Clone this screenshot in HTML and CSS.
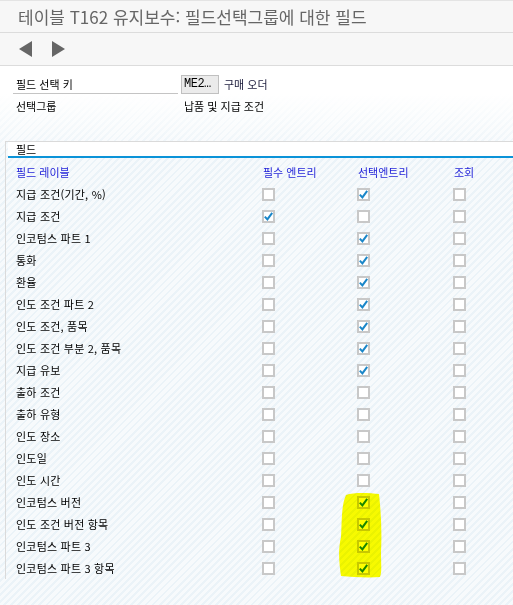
FILE: index.html
```html
<!DOCTYPE html>
<html lang="ko">
<head>
  <meta charset="UTF-8">
  <title>테이블 T162 유지보수</title>
  <link rel="stylesheet" href="styles.css">
</head>
<body>

  <header class="titlebar">테이블 T162 유지보수: 필드선택그룹에 대한 필드</header>

  <div class="toolbar">
    <svg class="nav-btn" width="14" height="16" viewBox="0 0 14 16"><polygon points="13,0 13,16 0,8" fill="#666"/></svg>
    <svg class="nav-btn" width="14" height="16" viewBox="0 0 14 16"><polygon points="1,0 1,16 14,8" fill="#666"/></svg>
  </div>

  <div class="content">
    <div class="head-form">
      <div class="form-row">
        <span class="form-label underline">필드 선택 키</span>
        <span class="key-box">ME2…</span>
        <span class="key-text">구매 오더</span>
      </div>
      <div class="form-row">
        <span class="form-label">선택그룹</span>
        <span class="group-text">납품 및 지급 조건</span>
      </div>
    </div>

    <div class="groupbox">
      <div class="group-title">필드</div>
      <div class="field-grid" id="fieldGrid">
        <div class="col-head">필드 레이블</div>
        <div class="col-head">필수 엔트리</div>
        <div class="col-head">선택엔트리</div>
        <div class="col-head">조회</div>
      </div>
    </div>

    <svg class="marker" width="46" height="88" viewBox="0 0 46 88">
      <path d="M8 3 C16 0 32 1 41 2 C43 20 44 40 43 60 C43 72 44 80 42 85 C30 86 14 85 3 84 C1 70 0 58 3 45 C4 30 3 14 8 3 Z" fill="#ffff00"/>
    </svg>
  </div>

  <script>
    const rows = [
      ['지급 조건(기간, %)', 0, 1, 0],
      ['지급 조건', 1, 0, 0],
      ['인코텀스 파트 1', 0, 1, 0],
      ['통화', 0, 1, 0],
      ['환율', 0, 1, 0],
      ['인도 조건 파트 2', 0, 1, 0],
      ['인도 조건, 품목', 0, 1, 0],
      ['인도 조건 부분 2, 품목', 0, 1, 0],
      ['지급 유보', 0, 1, 0],
      ['출하 조건', 0, 0, 0],
      ['출하 유형', 0, 0, 0],
      ['인도 장소', 0, 0, 0],
      ['인도일', 0, 0, 0],
      ['인도 시간', 0, 0, 0],
      ['인코텀스 버전', 0, 1, 0],
      ['인도 조건 버전 항목', 0, 1, 0],
      ['인코텀스 파트 3', 0, 1, 0],
      ['인코텀스 파트 3 항목', 0, 1, 0]
    ];

    const check = '<svg width="9" height="9" viewBox="0 0 9 9"><path d="M0.8 4.6 L3.4 7.4 L8.2 0.8" fill="none" stroke="#1a86c8" stroke-width="2"/></svg>';
    const grid = document.getElementById('fieldGrid');

    rows.forEach(function (r) {
      const label = document.createElement('div');
      label.className = 'cell label';
      label.textContent = r[0];
      grid.appendChild(label);
      for (let i = 1; i <= 3; i++) {
        const cell = document.createElement('div');
        cell.className = 'cell';
        cell.innerHTML = '<span class="cbox">' + (r[i] ? check : '') + '</span>';
        grid.appendChild(cell);
      }
    });
  </script>
</body>
</html>
```

FILE: styles.css
```css
body {
  margin: 0;
  width: 513px;
  height: 605px;
  overflow: hidden;
  font-family: "Noto Sans CJK KR", "Noto Sans", sans-serif;
  font-size: 11px;
  color: #000;
  background-color: #f7f7f7;
}

.titlebar {
  height: 31px;
  border-top: 1px solid #e4e4e4;
  border-bottom: 1px solid #dcdcdc;
  padding-left: 18px;
  display: flex;
  align-items: center;
  font-size: 17px;
  color: #666;
  background-color: #f7f7f7;
}

.toolbar {
  height: 32px;
  border-bottom: 1px solid #dcdcdc;
  display: flex;
  align-items: center;
  gap: 18px;
  padding-left: 19px;
  background-color: #f7f7f7;
}

.content {
  position: relative;
  height: 539px;
  background:
    linear-gradient(to bottom, #ffffff 28px, rgba(255, 255, 255, 0) 90px),
    repeating-linear-gradient(135deg, #f7fafc 0 3px, #ebf3f8 3px 5px);
}

.head-form {
  padding: 8px 0 0 13px;
  height: 67px;
}

.form-row {
  display: flex;
  align-items: center;
  height: 20px;
  margin-bottom: 2px;
}

.form-label {
  width: 165px;
  padding-left: 3px;
  box-sizing: border-box;
  height: 20px;
  line-height: 20px;
}

.underline {
  border-bottom: 1px solid #c4c4c4;
}

.key-box {
  width: 38px;
  height: 19px;
  margin-left: 3px;
  box-sizing: border-box;
  border: 1px solid #c0c0c0;
  background-color: #ebebeb;
  font-family: "Liberation Mono", monospace;
  font-size: 12px;
  line-height: 17px;
  padding-left: 2px;
  letter-spacing: -0.5px;
}

.key-text {
  margin-left: 5px;
  color: #1c1c3c;
}

.group-text {
  margin-left: 6px;
}

.groupbox {
  margin-left: 5px;
  border-top: 1px solid #dadada;
  border-left: 1px solid #dadada;
}

.group-title {
  height: 14px;
  line-height: 15px;
  padding-left: 8px;
  background-color: #fff;
  border-bottom: 2px solid #0b93d8;
  margin-left: 2px;
}

.field-grid {
  display: grid;
  grid-template-columns: 246px 95px 96px 1fr;
  grid-auto-rows: 22px;
  padding: 3px 0 0 10px;
}

.col-head {
  display: flex;
  align-items: center;
  color: #1e1ed8;
}

.col-head:nth-child(4n + 2),
.col-head:nth-child(4n + 3),
.col-head:nth-child(4n + 4) {
  padding-left: 1px;
}

.cell {
  display: flex;
  align-items: center;
}

.label {
  letter-spacing: 0.2px;
}

.cbox {
  width: 13px;
  height: 13px;
  box-sizing: border-box;
  border: 2px solid #c8c8c8;
  background-color: #fff;
  display: flex;
  align-items: center;
  justify-content: center;
}

.nav-btn {
  display: block;
}

.marker {
  position: absolute;
  left: 338px;
  top: 426px;
  mix-blend-mode: multiply;
}
```
